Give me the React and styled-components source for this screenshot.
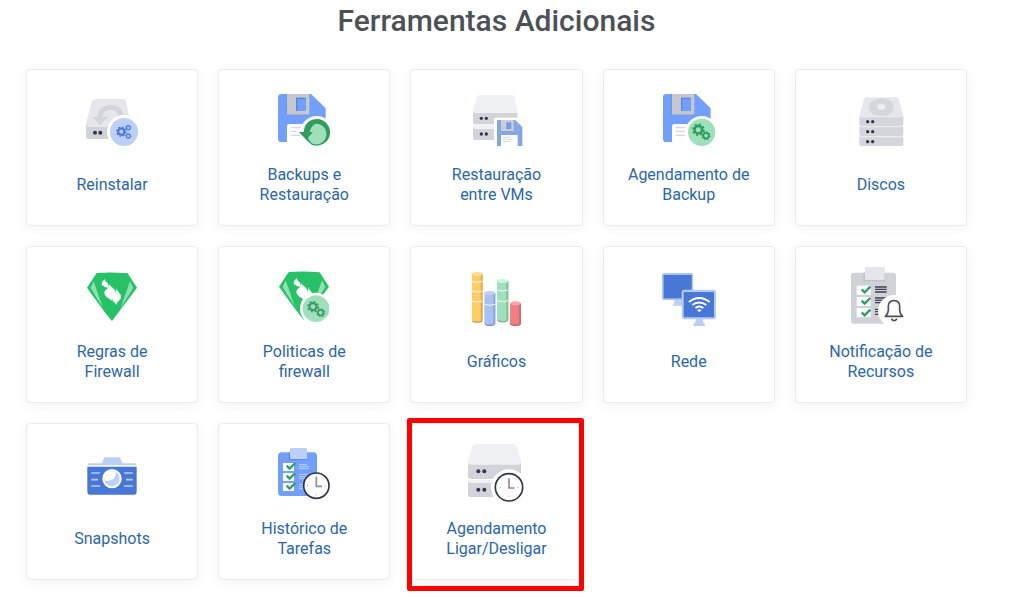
import React from "react";
import styled, { createGlobalStyle, css } from "styled-components";

const GlobalStyle = createGlobalStyle`
  *, *::before, *::after { box-sizing: border-box; }
  body {
    margin: 0;
    background: #fff;
    font-family: Roboto, "Liberation Sans", sans-serif;
  }
`;

const Page = styled.main`
  padding: 1px 43px 17px 26px;
`;

const Title = styled.h1`
  margin: 0 0 28px;
  color: #4d5156;
  font-size: 30px;
  font-weight: 500;
  line-height: 40px;
  text-align: center;
`;

const ToolGrid = styled.nav`
  display: grid;
  grid-template-columns: repeat(5, minmax(0, 1fr));
  gap: 20px;
`;

const Card = styled.a`
  position: relative;
  display: flex;
  flex-direction: column;
  align-items: center;
  gap: 11px;
  padding: 20px 16px;
  min-height: 157px;
  border: 1px solid #ebecef;
  border-radius: 4px;
  background: #fff;
  box-shadow: 0 2px 14px rgba(0, 0, 0, 0.05);
  text-decoration: none;
  ${({ $highlighted }) =>
    $highlighted &&
    css`
      &::after {
        content: "";
        position: absolute;
        inset: -6px -2px -12px -4px;
        border: 5px solid #f00;
        border-radius: 2px;
      }
    `}
`;

const Icon = styled.svg`
  display: block;
  flex: none;
  width: 64px;
  height: 64px;
`;

const Label = styled.span`
  display: flex;
  align-items: center;
  justify-content: center;
  min-height: 40px;
  color: #2b66ad;
  font-size: 16px;
  line-height: 20px;
  text-align: center;
  white-space: pre-line;
`;

const Gear = ({ x, y, r, color }) => (
  <g fill="none" stroke={color}>
    <circle cx={x} cy={y} r={r * 0.62} strokeWidth={r * 0.4} />
    <circle
      cx={x}
      cy={y}
      r={r * 0.9}
      strokeWidth={r * 0.3}
      pathLength="80"
      strokeDasharray="5 5"
    />
  </g>
);

const Dots = ({ x, y, gap = 15, r = 5 }) => (
  <g fill="#2f3750">
    <circle cx={x} cy={y} r={r} />
    <circle cx={x + gap} cy={y} r={r} />
  </g>
);

const Check = ({ x, y, color = "#2f9d5f" }) => (
  <path
    d={`M${x} ${y}l9 9 17-17`}
    fill="none"
    stroke={color}
    strokeWidth="7"
  />
);

const Clock = ({ x, y, r }) => (
  <g fill="none">
    <circle cx={x} cy={y} r={r} fill="#fff" stroke="#2f3447" strokeWidth="5" />
    <path d={`M${x} ${y - 27}v29h17`} stroke="#8b8f9b" strokeWidth="5" />
    <path
      d={`M${x - 28} ${y}h4M${x + 24} ${y}h4M${x} ${y + 25}v4`}
      stroke="#b9bcc4"
      strokeWidth="3"
    />
  </g>
);

const Floppy = () => (
  <>
    <path
      d="M64 27H153L197 70V171H64Q54 171 54 161V37Q54 27 64 27Z"
      fill="#719ffa"
    />
    <path d="M76 27h4v63h68v-6H82V27z" fill="#5e84d4" />
    <path d="M81 27h67v62H81z" fill="#c5c6ce" />
    <path d="M108 38h29v40h-29z" fill="#5585e4" />
    <path d="M112 42h25v36h-25z" fill="#719ffa" />
    <path d="M81 124Q81 117 88 117H197V172H81Z" fill="#fff" />
  </>
);

const Gem = () => (
  <>
    <path
      d="M80 33Q126 30 173 34L201 77L126 177Q108 157 51 77Z"
      fill="#27c267"
    />
    <path d="M71 58L62 78L98 136Z" fill="#93dfb2" />
    <path d="M180 58L190 78L152 137Z" fill="#93dfb2" />
    <g fill="#fff">
      <path d="M104 51C105 60 119 64 116 77C110 75 105 78 101 72C96 70 94 68 96 62C97 57 102 56 104 51Z" />
      <path d="M118 66C121 76 136 78 137 91C137 103 125 108 125 116C116 108 103 105 103 91C105 81 119 80 118 66Z" />
      <path d="M139 78C142 90 154 94 153 106C151 116 140 119 139 129C135 121 127 119 127 112C129 101 142 94 139 78Z" />
    </g>
  </>
);

const ReinstallIcon = () => (
  <Icon viewBox="180 90 192 192" aria-hidden="true">
    <path d="M226 117H310Q316 117 318 123L330 190V210H198V190L216 124Q219 117 226 117Z" fill="#e6e7ec" />
    <path d="M198 192Q198 201 207 201H330V237H206Q198 237 198 229Z" fill="#d0d2d8" />
    <path d="M217 171H232C234 146 252 135 274 135C298 135 313 150 313 178H297C295 158 286 149 273 149C257 149 248 158 248 171H264L240 195Z" fill="#d3d5da" />
    <Dots x={225} y={218} gap={16} r={6} />
    <circle cx="312" cy="216" r="51" fill="#fff" />
    <circle cx="312" cy="216" r="42" fill="#bccff7" />
    <Gear x={304} y={215} r={15} color="#4a78d6" />
    <Gear x={325} y={203} r={9} color="#4a78d6" />
    <Gear x={325} y={228} r={9} color="#4a78d6" />
  </Icon>
);

const BackupIcon = () => (
  <Icon viewBox="36 15 192 192" aria-hidden="true">
    <Floppy />
    <path d="M92 128h30M92 139h17M92 151h28" stroke="#d6d7dc" strokeWidth="4" />
    <circle cx="170" cy="142" r="49" fill="#fff" />
    <path d="M117 141H131C133 117 149 102 170 102A40 40 0 1 1 155 179L137 163Z" fill="#319c5d" />
    <path d="M144 158L159 141H149C154 123 162 116 173 116A31 31 0 1 1 163 178C154 175 147 168 144 158Z" fill="#9fdfb9" />
    <path d="M122 151L137 164Q143 178 158 183H120Z" fill="#fff" />
  </Icon>
);

const RestoreIcon = () => (
  <Icon viewBox="27 15 192 192" aria-hidden="true">
    <path d="M75 30H170Q177 30 179 37L187 75V84H54V75L65 37Q67 30 75 30Z" fill="#f0f1f5" />
    <path d="M54 78Q55 84 62 84H187V118H60Q54 118 54 112Z" fill="#d3d4d9" />
    <path d="M54 121H187V130H62Q56 130 54 125Z" fill="#f0f1f5" />
    <path d="M54 125Q56 131 62 131H187V165H60Q54 165 54 159Z" fill="#d3d4d9" />
    <Dots x={79} y={100} />
    <Dots x={79} y={147} />
    <path d="M117 104Q117 98 123 98H202V185H117Z" fill="#fff" />
    <path d="M130 105H181L202 126V183H126V109Q126 105 130 105Z" fill="#86a5e3" />
    <path d="M138 105h38v33h-38z" fill="#cccdd2" />
    <path d="M154 112h15v20h-15z" fill="#759ae6" />
    <path d="M138 150h50v33h-50z" fill="#fff" />
    <path d="M144 157h22M144 163h31M144 170h22" stroke="#d6d7dc" strokeWidth="3" />
  </Icon>
);

const BackupScheduleIcon = () => (
  <Icon viewBox="36 15 192 192" aria-hidden="true">
    <Floppy />
    <path d="M92 128h30M92 139h28M92 151h30" stroke="#d6d7dc" strokeWidth="4" />
    <circle cx="170" cy="142" r="49" fill="#fff" />
    <circle cx="170" cy="142" r="41" fill="#9fdfb9" />
    <Gear x={160} y={134} r={18} color="#2e9c60" />
    <Gear x={183} y={152} r={13} color="#2e9c60" />
  </Icon>
);

const DisksIcon = () => (
  <Icon viewBox="27 15 192 192" aria-hidden="true">
    <path d="M80 37H168Q174 37 176 43L190 92V100H58V92L72 43Q74 37 80 37Z" fill="#e6e7ec" />
    <ellipse cx="124" cy="67" rx="38" ry="27" fill="#d5d7dc" />
    <ellipse cx="124" cy="65" rx="12" ry="9" fill="#eceef2" />
    {[97, 127, 157].map((y) => (
      <React.Fragment key={y}>
        <path d={`M58 ${y - 3}H190V${y + 21}Q190 ${y + 26} 184 ${y + 26}H64Q58 ${y + 26} 58 ${y + 21}Z`} fill="#d4d6db" />
        <path d={`M58 ${y - 3}Q60 ${y} 66 ${y}H182Q188 ${y} 190 ${y - 3}`} fill="#eef0f3" />
        <Dots x={83} y={y + 13} />
      </React.Fragment>
    ))}
  </Icon>
);

const FirewallRulesIcon = () => (
  <Icon viewBox="30 15 192 192" aria-hidden="true">
    <Gem />
  </Icon>
);

const FirewallPolicyIcon = () => (
  <Icon viewBox="606 15 192 192" aria-hidden="true">
    <g transform="translate(576 -3)">
      <Gem />
    </g>
    <circle cx="738" cy="140" r="48" fill="#fff" />
    <circle cx="738" cy="140" r="40" fill="#9fdfb9" />
    <Gear x={729} y={134} r={17} color="#3f9d6b" />
    <Gear x={752} y={152} r={13} color="#3f9d6b" />
  </Icon>
);

const columns = [
  { x: 51, w: 32, top: 36, bottom: 176, rings: [58, 87, 117], fill: "#ffcc66", lid: "#ffdb94", side: "#e0ae55", base: "#b59a60" },
  { x: 88, w: 33, top: 93, bottom: 186, rings: [127], fill: "#aac2f3", lid: "#bfd1f8", side: "#8fa6d8", base: "#7f92bf" },
  { x: 126, w: 34, top: 57, bottom: 175, rings: [84, 116], fill: "#9fdfb9", lid: "#c5fbd8", side: "#86bd9c", base: "#7ba78c" },
  { x: 165, w: 33, top: 124, bottom: 186, rings: [], fill: "#ef7f83", lid: "#ffa4a7", side: "#cf6c71", base: "#b4686c" },
];

const ChartsIcon = () => (
  <Icon viewBox="27 15 192 192" aria-hidden="true">
    {columns.map(({ x, w, top, bottom, rings, fill, lid, side, base }) => (
      <g key={x}>
        <ellipse cx={x + w / 2} cy={bottom} rx={w / 2} ry="6" fill={base} />
        <path d={`M${x} ${top}h${w}V${bottom}q${-w / 2} 5 ${-w} 0z`} fill={fill} />
        <path d={`M${x + w - 6} ${top}h6V${bottom}l-6 2z`} fill={side} />
        <ellipse cx={x + w / 2} cy={top} rx={w / 2} ry="6" fill={lid} />
        {rings.map((y) => (
          <path key={y} d={`M${x} ${y}q${w / 2} 6 ${w} 0`} fill="none" stroke="#fff" strokeWidth="3" opacity="0.85" />
        ))}
      </g>
    ))}
  </Icon>
);

const NetworkIcon = () => (
  <Icon viewBox="606 15 192 192" aria-hidden="true">
    <path d="M658 112h30v19h-36q4-4 6-9z" fill="#bccff7" />
    <rect x="621" y="33" width="93" height="81" rx="6" fill="#aac3f5" />
    <path d="M626 39h84v70h-84z" fill="#4877d6" />
    <path d="M722 171h22v9q6 3 6 12h-35q0-9 7-12z" fill="#bccff7" />
    <rect x="680" y="83" width="103" height="89" rx="7" fill="#b4caf7" />
    <rect x="686" y="90" width="91" height="76" rx="2" fill="#4877d6" />
    <g fill="none" stroke="#fff" strokeWidth="6">
      <path d="M702 120Q732 96 764 120" />
      <path d="M712 129Q732 114 754 129" />
      <path d="M721 138Q732 129 745 138" />
    </g>
    <path d="M726 144Q733 139 740 144L733 151Z" fill="#fff" />
  </Icon>
);

const NotificationIcon = () => (
  <Icon viewBox="27 15 192 192" aria-hidden="true">
    <rect x="33" y="32" width="135" height="153" rx="9" fill="#d1d2d7" />
    <path d="M70 32h66v26H70z" fill="#c2c3ca" />
    <path d="M75 15h59v39H75z" fill="#e5e6eb" />
    <path d="M50 71h42v27H50zM50 105h42v27H50zM50 139h42v27H50z" fill="#fff" />
    <Check x={65} y={82} />
    <Check x={65} y={116} />
    <Check x={65} y={151} />
    <path d="M105 75h35M105 82h35M105 90h35M105 108h35M105 115h35M105 122h20M105 142h12M105 149h12M105 157h12" stroke="#3c4054" strokeWidth="4" />
    <circle cx="162" cy="147" r="48" fill="#fff" />
    <path d="M136 163Q145 155 145 145V133Q145 116 162 116Q179 116 179 133V145Q179 155 188 163ZM154 170Q162 182 171 170" fill="#fff" stroke="#4a4f62" strokeWidth="5" strokeLinejoin="round" />
  </Icon>
);

const SnapshotsIcon = () => (
  <Icon viewBox="30 12 192 192" aria-hidden="true">
    <path d="M58 70H96L101 56Q102 52 107 52H146Q151 52 152 56L157 70H194Q200 70 200 76H52Q52 70 58 70Z" fill="#bccff7" />
    <path d="M52 80H200V155Q200 164 191 164H61Q52 164 52 155Z" fill="#4877d6" />
    <path d="M64 99h26M64 119h20M64 138h26M162 99h26M168 119h20M162 138h26" stroke="#bccff7" strokeWidth="5" />
    <circle cx="126" cy="116" r="29" fill="#fff" />
    <circle cx="126" cy="116" r="23" fill="#bccff7" />
    <path d="M103 116A23 23 0 0 1 136 95Q140 111 126 119Q114 124 104 121Z" fill="#fff" />
  </Icon>
);

const HistoryIcon = () => (
  <Icon viewBox="606 12 192 192" aria-hidden="true">
    <rect x="624" y="37" width="117" height="131" rx="11" fill="#719ffa" />
    <path d="M657 37h52v22h-52z" fill="#5a82d6" />
    <rect x="660" y="24" width="51" height="33" rx="3" fill="#bccff7" />
    <path d="M639 69h33v24h-33zM639 99h33v24h-33zM639 129h33v24h-33z" fill="#fff" />
    <Check x={650} y={77} />
    <Check x={650} y={107} />
    <Check x={650} y={137} />
    <path d="M687 74h24M687 80h30M687 86h30M687 103h24M687 110h24M687 116h24M687 133h12M687 140h12M687 146h12" stroke="#bccff7" strokeWidth="3" />
    <Clock x={739} y={137} r={38} />
  </Icon>
);

const PowerScheduleIcon = () => (
  <Icon viewBox="192 96 192 192" aria-hidden="true">
    <path d="M226 96H339Q346 96 349 103L363 145V160H204V145L217 103Q220 96 226 96Z" fill="#f0f1f5" />
    <path d="M204 149Q205 158 214 158H354Q362 158 363 149V201H212Q204 201 204 193Z" fill="#d3d4d9" />
    <path d="M204 204H300V214H213Q205 213 204 207Z" fill="#f0f1f5" />
    <path d="M204 206Q206 213 214 213H320V255H212Q204 255 204 247Z" fill="#d3d4d9" />
    <Dots x={235} y={178} gap={18} r={6} />
    <Dots x={235} y={233} gap={18} r={6} />
    <circle cx="327" cy="226" r="54" fill="#fff" />
    <Clock x={327} y={226} r={41} />
  </Icon>
);

const tools = [
  { label: "Reinstalar", icon: ReinstallIcon },
  { label: "Backups e\nRestauração", icon: BackupIcon },
  { label: "Restauração\nentre VMs", icon: RestoreIcon },
  { label: "Agendamento de\nBackup", icon: BackupScheduleIcon },
  { label: "Discos", icon: DisksIcon },
  { label: "Regras de\nFirewall", icon: FirewallRulesIcon },
  { label: "Politicas de\nfirewall", icon: FirewallPolicyIcon },
  { label: "Gráficos", icon: ChartsIcon },
  { label: "Rede", icon: NetworkIcon },
  { label: "Notificação de\nRecursos", icon: NotificationIcon },
  { label: "Snapshots", icon: SnapshotsIcon },
  { label: "Histórico de\nTarefas", icon: HistoryIcon },
  { label: "Agendamento\nLigar/Desligar", icon: PowerScheduleIcon, highlighted: true },
];

export default function App() {
  return (
    <>
      <GlobalStyle />
      <Page>
        <Title>Ferramentas Adicionais</Title>
        <ToolGrid aria-label="Ferramentas Adicionais">
          {tools.map(({ label, icon: ToolIcon, highlighted }) => (
            <Card key={label} href="#" $highlighted={highlighted}>
              <ToolIcon />
              <Label>{label}</Label>
            </Card>
          ))}
        </ToolGrid>
      </Page>
    </>
  );
}
